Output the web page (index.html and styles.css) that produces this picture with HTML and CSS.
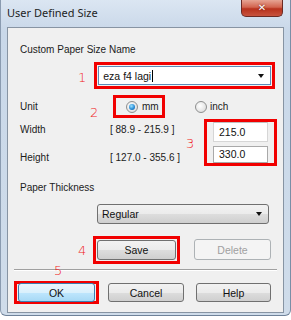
FILE: index.html
```html
<!DOCTYPE html>
<html>
<head>
<meta charset="utf-8">
<link rel="stylesheet" href="styles.css">
</head>
<body>
<div class="window">
  <div class="titlebar">
    <span class="title">User Defined Size</span>
    <span class="close">&#x2715;</span>
  </div>
  <div class="client">
    <div class="lbl row-name">Custom Paper Size Name</div>
    <div class="row row-combo">
      <span class="num n1">1</span>
      <div class="red red1">
        <div class="combo-edit"><span class="ctext">eza f4 lagi<span class="caret"></span></span><span class="arrow"></span></div>
      </div>
    </div>
    <div class="row row-unit">
      <span class="lbl unit-lbl">Unit</span>
      <span class="num n2">2</span>
      <div class="red red2"><span class="radio on"></span><span class="lbl">mm</span></div>
      <div class="inch"><span class="radio"></span><span class="lbl">inch</span></div>
    </div>
    <div class="row row-size">
      <div class="size-labels">
        <div class="lbl">Width</div>
        <div class="lbl">Height</div>
      </div>
      <div class="size-ranges">
        <div class="lbl">[ 88.9 - 215.9 ]</div>
        <div class="lbl">[ 127.0 - 355.6 ]</div>
      </div>
      <span class="num n3">3</span>
      <div class="red red3">
        <div class="field f-w">215.0</div>
        <div class="field f-h">330.0</div>
      </div>
    </div>
    <div class="lbl row-thick">Paper Thickness</div>
    <div class="row row-regular">
      <div class="combo-drop"><span class="ctext">Regular</span><span class="arrow"></span></div>
    </div>
    <div class="row row-save">
      <span class="num n4">4</span>
      <div class="red red4"><div class="btn save">Save</div></div>
      <div class="btn delete">Delete</div>
    </div>
    <div class="sep"><span class="num n5">5</span></div>
    <div class="row row-bottom">
      <div class="red red5"><div class="btn ok">OK</div></div>
      <div class="btn cancel">Cancel</div>
      <div class="btn help">Help</div>
    </div>
  </div>
</div>
</body>
</html>
```

FILE: styles.css
```css
html, body {
  margin: 0;
  padding: 0;
}
body {
  width: 291px;
  height: 320px;
  overflow: hidden;
  background: #ffffff;
  font-family: "DejaVu Sans", "Liberation Sans", sans-serif;
}
.window {
  width: 291px;
  height: 316px;
  box-sizing: border-box;
  background: linear-gradient(180deg, #d3dfec 0%, #c9d8e9 10%, #cfdcea 100%);
  border-left: 1px solid #8a9bb0;
  border-right: 1px solid #7a8ea6;
  border-bottom: 1px solid #6f8299;
  border-radius: 0 0 6px 6px;
}
.titlebar {
  height: 27px;
  display: flex;
  align-items: flex-start;
  justify-content: space-between;
  background: linear-gradient(180deg, #dbe6f2 0%, #cbd9ea 100%);
}
.title {
  font-family: "Noto Sans", sans-serif;
  font-size: 11px;
  color: #1e1e1e;
  margin: 5px 0 0 6px;
}
.close {
  width: 42px;
  height: 17px;
  margin-right: 7px;
  box-sizing: border-box;
  border: 1px solid #6b2a24;
  border-top: none;
  border-radius: 0 0 5px 5px;
  background: linear-gradient(180deg, #e6a493 0%, #d2644f 45%, #b8321d 55%, #c7533e 100%);
  color: #ffffff;
  font-size: 10px;
  font-weight: bold;
  text-align: center;
  line-height: 15px;
  text-shadow: 0 0 2px #5a1208;
}
.client {
  margin: 0 6px 0 6px;
  height: 286px;
  box-sizing: border-box;
  border: 1px solid #8794a3;
  background: #f0f0f0;
}
.lbl {
  font-family: "Liberation Sans", sans-serif;
  font-size: 10px;
  color: #1b1b1b;
  line-height: 14px;
  white-space: nowrap;
}
.row {
  display: flex;
  align-items: center;
}
.num {
  font-family: "DejaVu Sans", sans-serif;
  font-weight: 300;
  color: #f01c1c;
  font-size: 13px;
  line-height: 14px;
}
.red {
  border: 3px solid #f10000;
  box-sizing: border-box;
}
.row-name {
  margin: 15px 0 0 12px;
}
.row-combo {
  margin-top: 5px;
}
.n1 {
  margin-left: 70px;
  margin-right: 8px;
  padding-top: 4px;
}
.red1 {
  width: 181px;
  height: 27px;
  padding: 1px;
}
.combo-edit {
  height: 19px;
  box-sizing: border-box;
  border: 1px solid #5b8bb8;
  background: #ffffff;
  display: flex;
  align-items: center;
  justify-content: space-between;
  padding: 0 6px 0 4px;
}
.ctext {
  font-family: "Liberation Sans", sans-serif;
  font-size: 10.5px;
  color: #111;
  display: flex;
  align-items: center;
}
.caret {
  display: inline-block;
  width: 1px;
  height: 12px;
  background: #000;
  margin-left: 1px;
}
.arrow {
  width: 0;
  height: 0;
  border-left: 3.5px solid transparent;
  border-right: 3.5px solid transparent;
  border-top: 4px solid #111;
}
.row-unit {
  margin-top: 6px;
  height: 23px;
}
.unit-lbl {
  margin-left: 12px;
  width: 70px;
}
.n2 {
  width: 23px;
  padding-top: 12px;
}
.red2 {
  width: 52px;
  height: 23px;
  display: flex;
  align-items: center;
  padding-left: 10px;
  gap: 4px;
}
.radio {
  width: 12px;
  height: 12px;
  border-radius: 50%;
  box-sizing: border-box;
  border: 1px solid #8e8f8f;
  background: radial-gradient(circle at 40% 40%, #ffffff 0%, #e6e6e6 60%, #cfcfcf 100%);
  position: relative;
}
.radio.on::after {
  content: "";
  position: absolute;
  left: 2px;
  top: 2px;
  width: 6px;
  height: 6px;
  border-radius: 50%;
  background: radial-gradient(circle at 40% 35%, #9de3ff 0%, #2a8ed8 55%, #0d4f8e 100%);
}
.inch {
  display: flex;
  align-items: center;
  gap: 3px;
  margin-left: 30px;
}
.row-size {
  margin-top: 1px;
  align-items: stretch;
  height: 47px;
}
.size-labels {
  margin-left: 12px;
  width: 90px;
  display: flex;
  flex-direction: column;
  justify-content: space-between;
  padding: 4px 0 1px;
}
.size-ranges {
  width: 76px;
  display: flex;
  flex-direction: column;
  justify-content: space-between;
  padding: 4px 0 1px;
}
.n3 {
  align-self: center;
  width: 18px;
  padding-top: 2px;
}
.red3 {
  width: 73px;
  height: 47px;
  display: flex;
  flex-direction: column;
  justify-content: space-between;
  padding: 0 6px 0 6px;
}
.field {
  height: 20px;
  box-sizing: border-box;
  border: 1px solid #d6d6d6;
  border-top-color: #c0c0c0;
  background: #ffffff;
  font-family: "Liberation Sans", sans-serif;
  font-size: 10.5px;
  color: #111;
  line-height: 18px;
  padding-left: 5px;
}
.f-h {
  height: 17px;
  line-height: 15px;
  border-color: #a9a9a9;
}
.row-thick {
  margin: 15px 0 0 12px;
}
.row-regular {
  margin-top: 9px;
  padding-left: 89px;
}
.combo-drop {
  width: 172px;
  height: 20px;
  box-sizing: border-box;
  border: 1px solid #707070;
  border-radius: 3px;
  background: linear-gradient(180deg, #f2f2f2 0%, #ebebeb 50%, #dddddd 51%, #cfcfcf 100%);
  display: flex;
  align-items: center;
  justify-content: space-between;
  padding: 0 6px 0 4px;
}
.row-save {
  margin-top: 12px;
  height: 27px;
}
.n4 {
  margin-left: 70px;
  width: 15px;
  padding-top: 2px;
}
.red4 {
  width: 87px;
  height: 28px;
  padding: 1px;
}
.btn {
  box-sizing: border-box;
  border: 1px solid #707070;
  border-radius: 3px;
  background: linear-gradient(180deg, #f2f2f2 0%, #ebebeb 50%, #dddddd 51%, #cfcfcf 100%);
  font-family: "Liberation Sans", sans-serif;
  font-size: 10.5px;
  color: #111;
  text-align: center;
  display: flex;
  align-items: center;
  justify-content: center;
}
.save {
  height: 20px;
}
.delete {
  margin-left: 14px;
  width: 77px;
  height: 21px;
  color: #a0a0a0;
  border-color: #adb2b5;
  background: #f4f4f4;
}
.sep {
  margin: 6px 0 0 6px;
  width: 263px;
  height: 1px;
  background: #a0a0a0;
  border-bottom: 1px solid #ffffff;
  position: relative;
}
.n5 {
  position: absolute;
  left: 40px;
  top: -5px;
}
.row-bottom {
  margin-top: 10px;
  padding-left: 6px;
  height: 23px;
}
.red5 {
  width: 85px;
  height: 23px;
  padding: 0 1px;
  display: flex;
  align-items: center;
}
.ok {
  width: 100%;
  height: 19px;
  border-color: #3c7fb1;
  background: linear-gradient(180deg, #eaf6fd 0%, #d9f0fc 50%, #bee6fd 51%, #a7d9f5 100%);
}
.cancel {
  margin-left: 9px;
  width: 76px;
  height: 19px;
}
.help {
  margin-left: 12px;
  width: 75px;
  height: 19px;
}
```
